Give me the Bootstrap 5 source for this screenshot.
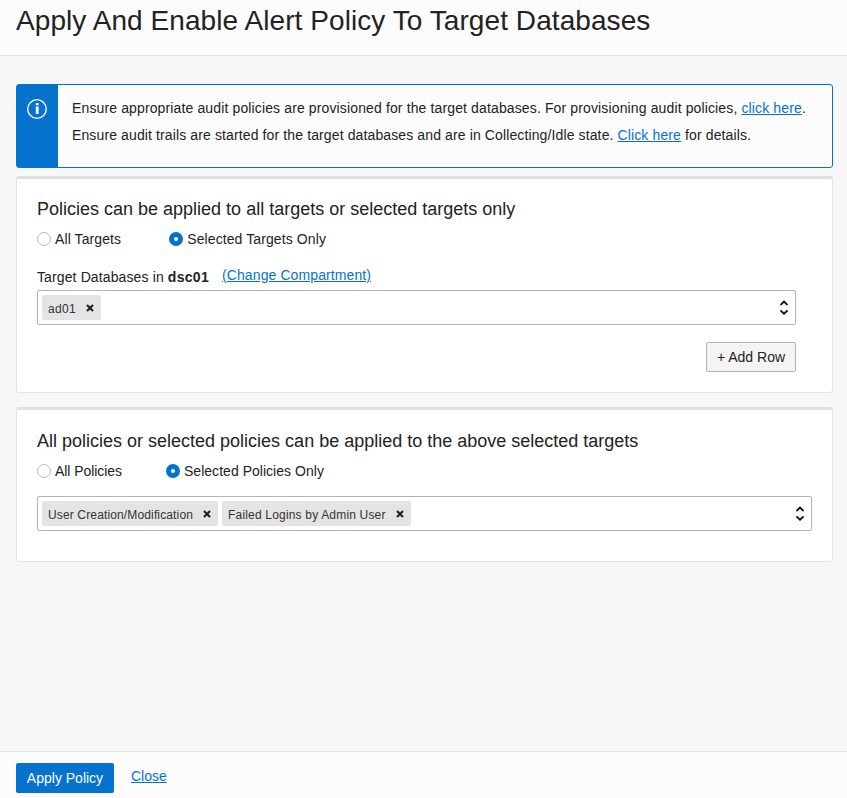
<!DOCTYPE html>
<html lang="en">
<head>
<meta charset="utf-8">
<meta name="viewport" content="width=device-width, initial-scale=1">
<title>Apply And Enable Alert Policy To Target Databases</title>
<link rel="stylesheet" href="https://cdn.jsdelivr.net/npm/bootstrap@5.3.0/dist/css/bootstrap.min.css">
<style>
body{font-family:"Liberation Sans",Arial,sans-serif;font-size:14px;line-height:20px;color:#222;background:#f7f7f7;height:798px;overflow:hidden}
a{color:#0572ce}
.page-head{height:56px;background:#fcfcfc;border-bottom:1px solid #e1e3e6}
.page-head h1{font-size:28px;line-height:42px;font-weight:400;letter-spacing:.07px}
.page-main{padding:28px 14px 0 16px}
.notice{height:84px;border:1px solid #0572ce;border-radius:3px;background:#fcfcfc}
.notice-icon{width:41px;background:#0572ce;padding:14px 1px 0 0}
.notice-text{padding:10px 14px;line-height:27px;letter-spacing:.13px}
.notice-text div + div{letter-spacing:.12px}
.panel{background:#fff;border:1px solid #e1e3e6;border-top:3px solid #dfe1e5;border-radius:3px;padding:18px 20px 0}
.panel-targets{height:217px;margin-top:8px;padding-right:36px}
.panel-policies{height:155px;margin-top:14px;padding-top:19px}
.panel h2{font-size:18px;line-height:24px;font-weight:400}
.radio-opt{gap:4px}
.radio-opt input{appearance:none;width:14px;height:14px;margin:0;border:1px solid #b3b8c1;border-radius:50%;background:#fff}
.radio-opt input:checked{border:5px solid #0572ce}
.gap-targets{gap:48px;letter-spacing:.1px}
.gap-policies{gap:44px}
.gap-policies .radio-opt:first-child{letter-spacing:-.06px}
.gap-policies .radio-opt:last-child{letter-spacing:.03px}
.label-row{margin-top:16px;height:25px;letter-spacing:.12px}
.label-text{padding-top:2px}
.label-text b{letter-spacing:.3px}
.change-link{margin-left:13px;letter-spacing:.1px}
.pick{height:35px;border:1px solid #aeb4bf;border-radius:2px;padding:0 7px 0 4px;background:#fff}
.pick-policies{margin-top:15px}
.tag{height:25px;background:#e4e4e4;border-radius:2px;font-size:12px;padding:0 7px 0 6px;color:#333;letter-spacing:.3px}
.tag span{padding-top:2px}
.pick-policies .tag{letter-spacing:.14px}
.pick-policies .tag + .tag{letter-spacing:.18px}
.tag-x{margin-left:10px}
.add-line{margin-top:17px}
.btn-row{width:90px;height:30px;padding:0;font-size:14px;line-height:28px;border:1px solid #aeb4bf;border-radius:2px;background:#f4f4f4;color:#222}
.page-foot{height:47px;background:#fcfcfc;border-top:1px solid #e1e3e6;padding:11px 16px 0}
.btn-apply{width:98px;height:30px;padding:0;font-size:14px;line-height:30px;border:0;border-radius:2px;background:#0572ce;color:#fff}
.foot-link{margin:3px 0 0 17px}
</style>
</head>
<body class="d-flex flex-column">
<header class="page-head px-3"><h1 class="m-0 text-nowrap">Apply And Enable Alert Policy To Target Databases</h1></header>
<main class="page-main flex-grow-1">
  <div class="notice d-flex">
    <div class="notice-icon d-flex justify-content-center align-items-start flex-shrink-0">
      <svg width="20" height="20" viewBox="0 0 20 20"><circle cx="10" cy="10" r="9.3" fill="none" stroke="#fff" stroke-width="1.3"/><path d="M8.8 4h2.8v2.2H8.8zM8.8 7.4h2.8V15H8.8z" fill="#fff"/></svg>
    </div>
    <div class="notice-text text-nowrap">
      <div>Ensure appropriate audit policies are provisioned for the target databases. For provisioning audit policies, <a href="#">click here</a>.</div>
      <div>Ensure audit trails are started for the target databases and are in Collecting/Idle state. <a href="#">Click here</a> for details.</div>
    </div>
  </div>
  <section class="panel panel-targets">
    <h2 class="m-0">Policies can be applied to all targets or selected targets only</h2>
    <div class="d-flex mt-2 gap-targets">
      <label class="radio-opt d-flex align-items-center"><input type="radio" name="targets">All Targets</label>
      <label class="radio-opt d-flex align-items-center"><input type="radio" name="targets" checked>Selected Targets Only</label>
    </div>
    <div class="d-flex label-row">
      <span class="label-text">Target Databases in <b>dsc01</b></span>
      <a class="change-link" href="#">(Change Compartment)</a>
    </div>
    <div class="pick d-flex align-items-center gap-1">
      <span class="tag d-flex align-items-center"><span>ad01</span><svg class="tag-x" width="8" height="8" viewBox="0 0 8 8"><path d="M1 .9 7 7.1M7 .9 1 7.1" stroke="#222" stroke-width="2.1"/></svg></span>
      <svg class="ms-auto" width="8" height="15" viewBox="0 0 8 15" fill="none" stroke="#111" stroke-width="1.8"><path d="M.4 5 4 1.6 7.600 5M.4 10.300 4 13.700 7.600 10.300"/></svg>
    </div>
    <div class="d-flex justify-content-end add-line"><button type="button" class="btn btn-row">+ Add Row</button></div>
  </section>
  <section class="panel panel-policies">
    <h2 class="m-0">All policies or selected policies can be applied to the above selected targets</h2>
    <div class="d-flex mt-2 gap-policies">
      <label class="radio-opt d-flex align-items-center"><input type="radio" name="policies">All Policies</label>
      <label class="radio-opt d-flex align-items-center"><input type="radio" name="policies" checked>Selected Policies Only</label>
    </div>
    <div class="pick pick-policies d-flex align-items-center gap-1">
      <span class="tag d-flex align-items-center"><span>User Creation/Modification</span><svg class="tag-x" width="8" height="8" viewBox="0 0 8 8"><path d="M1 .9 7 7.1M7 .9 1 7.1" stroke="#222" stroke-width="2.1"/></svg></span>
      <span class="tag d-flex align-items-center"><span>Failed Logins by Admin User</span><svg class="tag-x" width="8" height="8" viewBox="0 0 8 8"><path d="M1 .9 7 7.1M7 .9 1 7.1" stroke="#222" stroke-width="2.1"/></svg></span>
      <svg class="ms-auto" width="8" height="15" viewBox="0 0 8 15" fill="none" stroke="#111" stroke-width="1.8"><path d="M.4 5 4 1.6 7.600 5M.4 10.300 4 13.700 7.600 10.300"/></svg>
    </div>
  </section>
</main>
<footer class="page-foot d-flex align-items-start">
  <button type="button" class="btn btn-apply">Apply Policy</button>
  <a class="foot-link" href="#">Close</a>
</footer>
<script src="https://cdn.jsdelivr.net/npm/bootstrap@5.3.0/dist/js/bootstrap.bundle.min.js"></script>
</body>
</html>
